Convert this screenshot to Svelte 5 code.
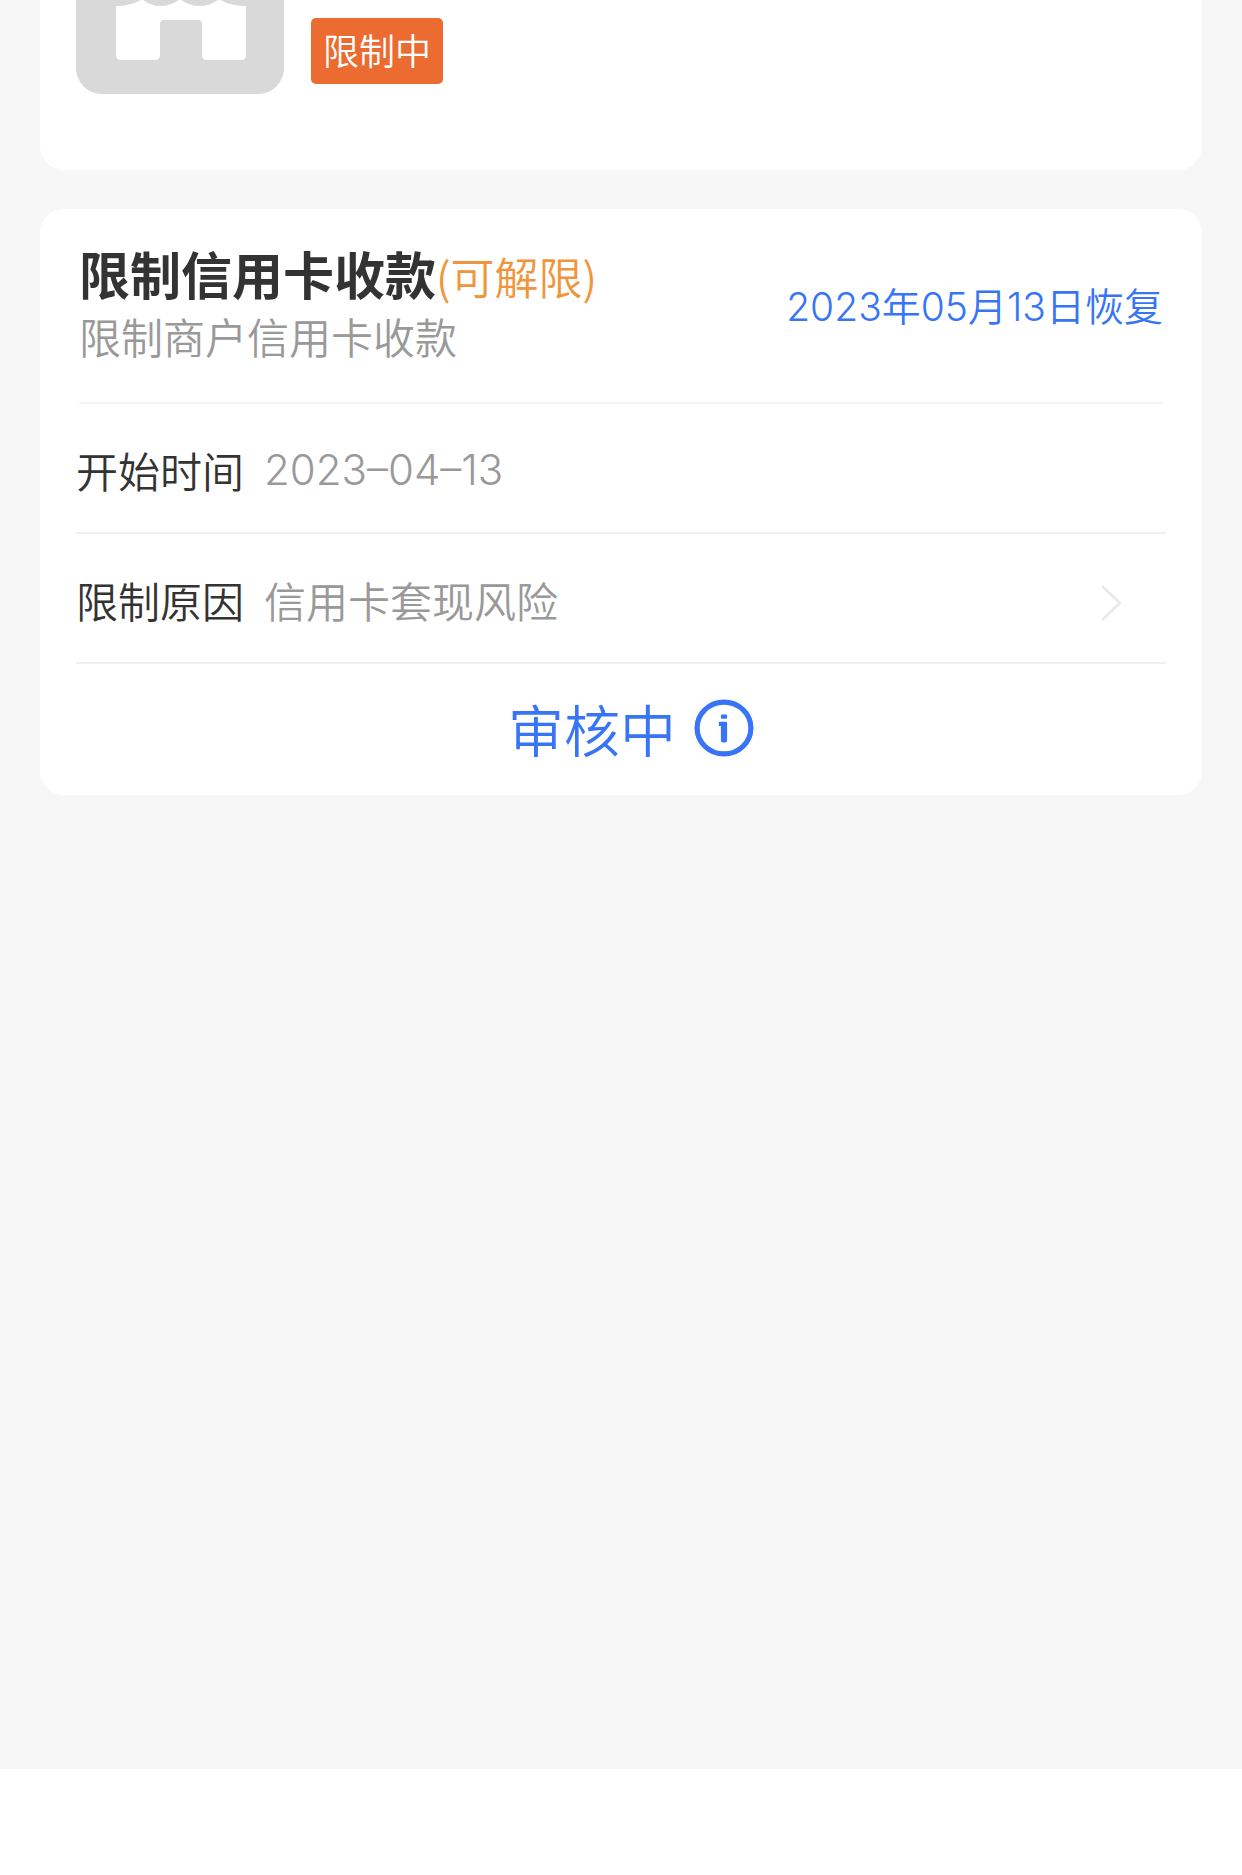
<script lang="ts">
    const restriction = {
        title: "限制信用卡收款",
        hint: "(可解限)",
        desc: "限制商户信用卡收款",
        restore: "2023年05月13日恢复",
        start: "2023–04–13",
        reason: "信用卡套现风险",
    };
</script>

<div class="page">
    <main>
        <section class="card shop">
            <svg class="shop-icon" viewBox="0 0 208 94" aria-hidden="true">
                <path d="M0 0H208V68A26 26 0 0 1 182 94H26A26 26 0 0 1 0 68Z" fill="#d9d9d9" />
                <path
                    d="M40 6Q54 6 65 0H67Q84 12 103 0H105Q124 12 142 0H144Q156 6 170 6V55Q170 60 165 60H131Q126 60 126 55V24Q126 20 122 20H88Q84 20 84 24V55Q84 60 79 60H45Q40 60 40 55Z"
                    fill="#fff"
                />
            </svg>
            <span class="tag">限制中</span>
        </section>

        <section class="card">
            <header class="head">
                <div>
                    <div class="title-line">
                        <h1>{restriction.title}</h1>
                        <span class="hint">{restriction.hint}</span>
                    </div>
                    <p class="desc">{restriction.desc}</p>
                </div>
                <span class="restore">{restriction.restore}</span>
            </header>

            <div class="row">
                <span class="label">开始时间</span>
                <span class="value">{restriction.start}</span>
            </div>

            <button class="row">
                <span class="label">限制原因</span>
                <span class="value">{restriction.reason}</span>
                <svg class="arrow" viewBox="0 0 22 44" aria-hidden="true">
                    <path d="M2 9L20 26L2 43" fill="none" stroke="#e8e8e8" stroke-width="2.5" />
                </svg>
            </button>

            <button class="status">
                <span>审核中</span>
                <svg class="info" viewBox="0 0 58 56" aria-hidden="true">
                    <ellipse cx="29" cy="28" rx="26" ry="25" fill="none" stroke="#3875f6" stroke-width="5" />
                    <rect x="26" y="15" width="6" height="4" rx="1" fill="#3875f6" />
                    <path d="M24 22H31Q32 22 32 23V40Q32 42 29 42Q26 42 26 40V26H24Z" fill="#3875f6" />
                </svg>
            </button>
        </section>
    </main>

    <footer></footer>
</div>

<style>
    :global(body) {
        margin: 0;
        background: #fff;
        font-family: Inter, "Noto Sans CJK SC", sans-serif;
        font-weight: 350;
    }

    .page {
        min-height: 100vh;
        display: flex;
        flex-direction: column;
    }

    main {
        flex: 1;
        padding: 0 40px;
        background: #f7f7f7;
    }

    .card {
        background: #fff;
        border-radius: 24px;
        padding: 0 36px;
    }

    .shop {
        display: flex;
        align-items: flex-start;
        gap: 27px;
        padding-bottom: 76px;
        margin-bottom: 39px;
        border-radius: 0 0 24px 24px;
    }

    .shop-icon {
        width: 208px;
        height: 94px;
    }

    .tag {
        margin-top: 18px;
        padding: 2px 12px 0;
        line-height: 64px;
        font-size: 36px;
        color: #fff;
        background: #eb6b30;
        border-radius: 5px;
    }

    .head {
        display: flex;
        align-items: center;
        justify-content: space-between;
        margin: 0 3px;
        padding: 35px 0 33px;
        border-bottom: 2px solid #f3f3f3;
    }

    .title-line {
        display: flex;
        align-items: baseline;
    }

    h1 {
        margin: 0;
        font-size: 51px;
        line-height: 64px;
        font-weight: 700;
        color: #333;
    }

    .hint {
        font-family: "Noto Sans CJK SC", sans-serif;
        font-size: 44px;
        line-height: 64px;
        color: #ef963d;
    }

    .desc {
        margin: 0;
        font-size: 42px;
        line-height: 60px;
        color: #999;
    }

    .restore {
        font-size: 39px;
        line-height: 58px;
        color: #3875f6;
    }

    button {
        font: inherit;
        border: none;
        background: none;
        cursor: pointer;
    }

    .row {
        box-sizing: border-box;
        display: flex;
        align-items: center;
        gap: 20px;
        width: 100%;
        height: 130px;
        padding: 2px 44px 0 0;
        border-bottom: 2px solid #f0f0f0;
        font-size: 42px;
        text-align: left;
    }

    .label {
        color: #333;
    }

    .value {
        color: #999;
    }

    .arrow {
        width: 22px;
        height: 44px;
        margin-left: auto;
    }

    .status {
        display: flex;
        align-items: center;
        justify-content: center;
        gap: 18px;
        width: 100%;
        height: 131px;
        padding: 0 0 4px 20px;
        font-size: 56px;
        color: #3875f6;
    }

    .info {
        width: 60px;
        height: 58px;
    }

    footer {
        height: 106px;
    }
</style>
